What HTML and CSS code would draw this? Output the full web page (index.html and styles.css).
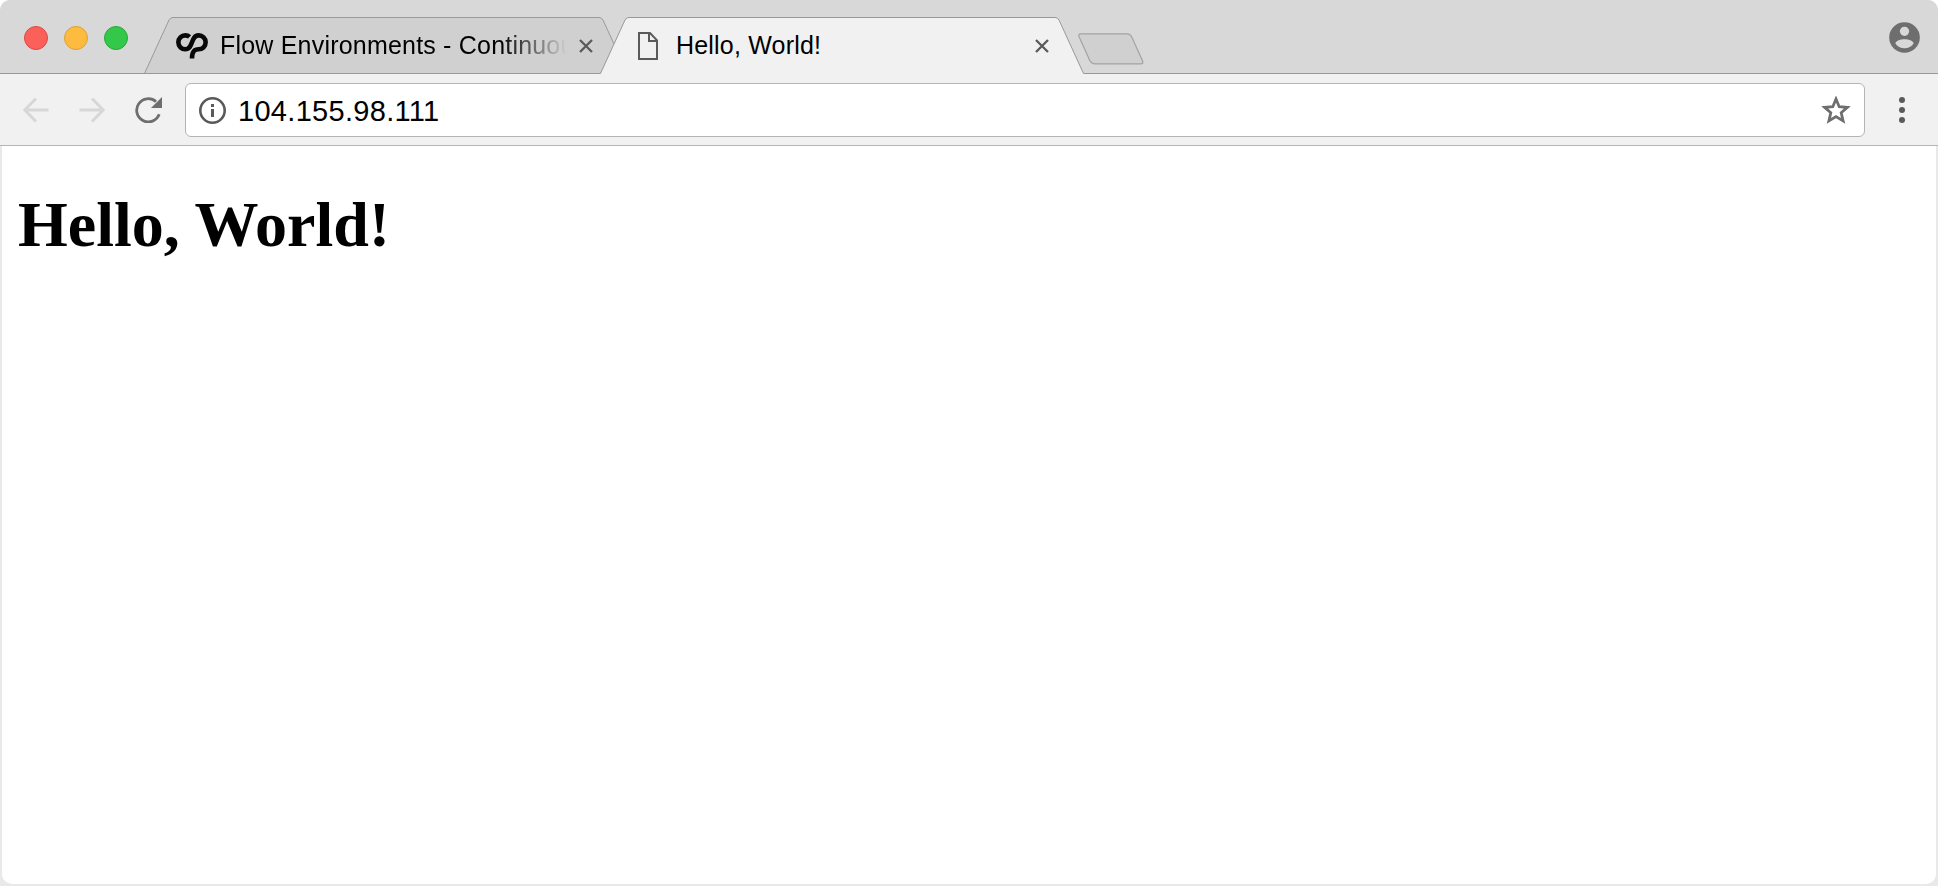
FILE: index.html
```html
<!DOCTYPE html>
<html lang="en">
<head>
<meta charset="utf-8">
<title>Hello, World!</title>
<link rel="stylesheet" href="styles.css">
</head>
<body>
<div class="window">
  <header class="tabstrip">
    <div class="lights">
      <span class="light red"></span><span class="light yellow"></span><span class="light green"></span>
    </div>
    <nav class="tabs">
      <div class="tab inactive">
        <svg class="tab-shape" viewBox="0 0 484 57"><path d="M.5 56.5 25 3Q26.3.5 29 .5H455Q457.7.5 459 3L483.5 56.5" fill="#d0d0d0" stroke="#999"/></svg>
        <svg class="logo" viewBox="0 0 32 26" fill="none" stroke="#080808" stroke-width="4.6"><path d="M13.6 3.9C12.4 2.8 11 2.4 9.3 2.4A6.95 6.95 0 0 0 9.3 16.3C17.6 16.3 14.2 2.4 22.7 2.4A6.95 6.95 0 0 1 22.7 16.3C18 16.3 16 19 16 25.5"/></svg>
        <span class="tab-title fade">Flow Environments - Continuous</span>
        <svg class="close" viewBox="0 0 14 14"><path d="M1 1 13 13M13 1 1 13"/></svg>
      </div>
      <div class="tab active">
        <svg class="tab-shape" viewBox="0 0 484 57"><path d="M0 57 .5 56.5 25 3Q26.3.5 29 .5H455Q457.7.5 459 3L483.5 56.5 484 57" fill="#f1f1f1" stroke="#999"/></svg>
        <svg class="file" viewBox="0 0 20 28" fill="none" stroke="#5a5a5c" stroke-width="2"><path d="M1 1H12L19 8.3V27H1ZM11 1V9H19"/></svg>
        <span class="tab-title">Hello, World!</span>
        <svg class="close" viewBox="0 0 14 14"><path d="M1 1 13 13M13 1 1 13"/></svg>
      </div>
    </nav>
    <svg class="new-tab" viewBox="0 0 66 32"><path d="M3 .8H49Q52 .8 53.5 3.5L64.6 28Q65.5 30.8 63 30.8H17Q13.5 30.8 12 28L1 3.5Q.2.8 3 .8Z" fill="#d0d0d0" stroke="#a3a3a3" stroke-width="1.2"/></svg>
    <svg class="profile" viewBox="0 0 31 31"><circle cx="15.5" cy="15.5" r="15.3" fill="#6e6e6e"/><circle cx="15.5" cy="9.3" r="4.6" fill="#d8d8d8"/><path d="M6.3 21.3C8.5 15.9 22.5 15.9 24.7 21.3 21 28 10 28 6.3 21.3Z" fill="#d8d8d8"/></svg>
  </header>
  <div class="toolbar">
    <svg class="back" viewBox="0 0 26 26"><path d="M13 1.5 1.8 13 13 24.5M2 13H25.5"/></svg>
    <svg class="forward" viewBox="0 0 26 26"><path d="M13 1.5 24.2 13 13 24.5M24 13H.5"/></svg>
    <svg class="reload" viewBox="0 0 28 26"><path d="M24.2 17.3A11.6 11.6 0 1 1 21 4.6" fill="none" stroke="#6e6e6e" stroke-width="2.8"/><path d="M27 0V11H16Z" fill="#6e6e6e"/></svg>
    <div class="omnibox">
      <svg class="info" viewBox="0 0 27 27"><circle cx="13.5" cy="13.5" r="12.2" fill="none" stroke="#5a5a5a" stroke-width="2.6"/><path d="M12 7h3v3h-3zM12 12h3v8h-3z" fill="#5a5a5a"/></svg>
      <span class="url">104.155.98.111</span>
      <svg class="star" viewBox="0 0 30 28"><path d="M15 3 18.2 10.7 26.4 11.4 20.2 16.8 22.1 24.9 15 20.6 7.9 24.9 9.8 16.8 3.6 11.4 11.8 10.7Z" fill="none" stroke="#6e6e6e" stroke-width="2.8"/></svg>
    </div>
    <svg class="menu" viewBox="0 0 6 26" fill="#5a5a5a"><circle cx="3" cy="3" r="3"/><circle cx="3" cy="13" r="3"/><circle cx="3" cy="23" r="3"/></svg>
  </div>
  <main class="page"><h1>Hello, World!</h1></main>
</div>
</body>
</html>
```
FILE: styles.css
```css
* { box-sizing: border-box; }
body { margin: 0; background: #fff; font-family: "Liberation Sans", Arial, sans-serif; color: #000; }
svg { display: block; flex: none; }
.window { display: flex; flex-direction: column; width: 1938px; height: 886px; background: #e9e9e9; border-radius: 10px 10px 0 0; overflow: hidden; }
.tabstrip { display: flex; align-items: flex-start; flex: none; height: 74px; padding-left: 24px; background: #d8d8d8; box-shadow: inset 0 -1px #999; }
.lights { display: flex; gap: 16px; margin-top: 26px; width: 120px; }
.light { width: 24px; height: 24px; border-radius: 50%; border: 1px solid; }
.red { background: #fc605b; border-color: #e14640; }
.yellow { background: #fdbc40; border-color: #dfa033; }
.green { background: #34c84a; border-color: #27a934; }
.tabs { display: flex; margin-top: 17px; }
.tab { position: relative; display: flex; align-items: center; width: 484px; height: 57px; }
.tab > * { position: relative; }
.tab .tab-shape { position: absolute; inset: 0; width: 484px; height: 57px; }
.inactive { padding-left: 32px; }
.inactive::after { content: ""; position: absolute; left: 0; right: 0; bottom: 0; height: 1px; background: #999; }
.active { margin-left: -28px; padding-left: 38px; }
.logo { width: 32px; height: 26px; }
.file { width: 20px; height: 28px; }
.tab-title { font-size: 25px; letter-spacing: .2px; white-space: nowrap; overflow: hidden; line-height: 32px; padding-bottom: 1px; }
.inactive .tab-title { width: 347px; margin-left: 12px; }
.active .tab-title { width: 358px; margin-left: 18px; }
.fade { -webkit-mask-image: linear-gradient(90deg, #000 280px, transparent 347px); mask-image: linear-gradient(90deg, #000 280px, transparent 347px); }
.close { width: 14px; height: 14px; fill: none; stroke: #5a5a5a; stroke-width: 2.3; }
.inactive .close { margin-left: 12px; }
.active .close { margin-left: 1px; }
.new-tab { width: 66px; height: 32px; margin: 33px 0 0 -6.5px; }
.profile { width: 31px; height: 31px; margin: 22px 18.5px 0 auto; }
.toolbar { display: flex; align-items: center; flex: none; height: 72px; padding: 0 33px 0 23px; background: #f1f1f1; box-shadow: inset 0 -1px #b5b5b5; }
.back, .forward { width: 26px; height: 26px; fill: none; stroke: #d7d7d7; stroke-width: 3; }
.forward { margin-left: 30px; }
.reload { width: 28px; height: 26px; margin-left: 30px; }
.omnibox { display: flex; align-items: center; width: 1680px; height: 54px; margin-left: 22px; padding: 0 13px; border: 1px solid #b4b4b4; border-radius: 6px; background: #fff; }
.info { width: 27px; height: 27px; }
.url { margin-left: 12px; padding-top: 2px; font-size: 29px; letter-spacing: .3px; }
.star { width: 30px; height: 28px; margin-left: auto; }
.menu { width: 6px; height: 26px; margin-left: auto; }
.page { flex: 1; margin: 0 2px 2px; padding: 42px 16px; background: #fff; border-radius: 0 0 10px 10px; }
h1 { margin: 0; font: bold 64px/74px "Liberation Serif", "Times New Roman", serif; }
```
